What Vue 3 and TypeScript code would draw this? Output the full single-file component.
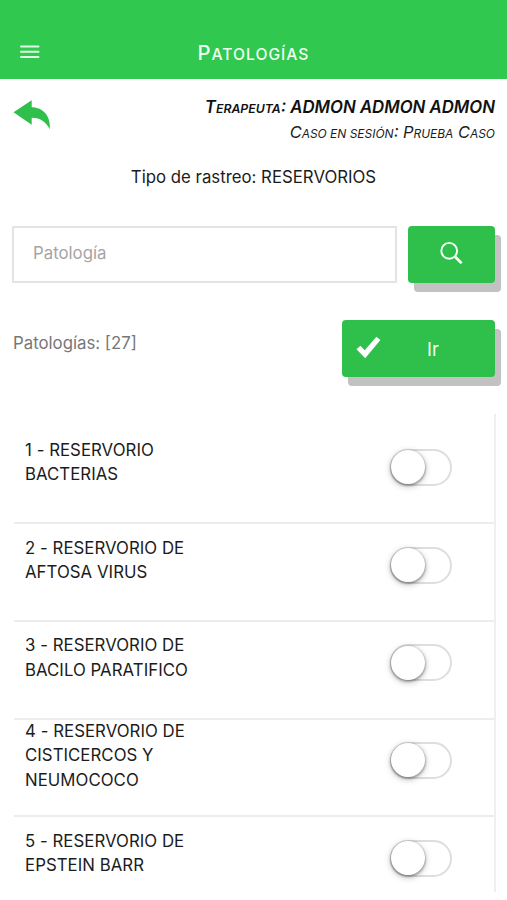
<script setup lang="ts">
import { ref } from 'vue'

interface Pathology {
  id: number
  lines: string[]
  active: boolean
}

const total = 27
const search = ref('')
const items = ref<Pathology[]>([
  { id: 1, lines: ['RESERVORIO', 'BACTERIAS'], active: false },
  { id: 2, lines: ['RESERVORIO DE', 'AFTOSA VIRUS'], active: false },
  { id: 3, lines: ['RESERVORIO DE', 'BACILO PARATIFICO'], active: false },
  { id: 4, lines: ['RESERVORIO DE', 'CISTICERCOS Y', 'NEUMOCOCO'], active: false },
  { id: 5, lines: ['RESERVORIO DE', 'EPSTEIN BARR'], active: false },
])
</script>

<template>
  <div class="screen">
    <header class="bar">
      <button class="menu" aria-label="Menú">
        <svg width="20" height="14" viewBox="0 0 20 14">
          <path d="M1 1.5H18.5M1 6.7H18.5M1 12H18.5" stroke="#e0f9e4" stroke-width="2" stroke-linecap="round" />
        </svg>
      </button>
      <h1 class="title">P<span class="sc">atologías</span></h1>
    </header>

    <section class="session">
      <button class="back" aria-label="Volver">
        <svg width="38" height="30" viewBox="0 0 38 30">
          <path d="M0.5 12.3 18.7 0.3V7.2C30 7.2 38 16 36.8 29.3C33 22.5 28 17.8 18.7 17.8V24.8Z" fill="#2fbf4b" />
        </svg>
      </button>
      <div class="who">
        <p class="therapist">T<span class="sc">erapeuta</span>: ADMON ADMON ADMON</p>
        <p class="case">C<span class="sc">aso en sesión</span>: P<span class="sc">rueba</span> C<span class="sc">aso</span></p>
      </div>
    </section>

    <p class="kind">Tipo de rastreo: RESERVORIOS</p>

    <form class="search" @submit.prevent>
      <input v-model="search" class="field" type="text" placeholder="Patología" />
      <button class="btn find" aria-label="Buscar">
        <svg width="24" height="24" viewBox="0 0 24 24" fill="none" stroke="#f2fff4">
          <circle cx="9.2" cy="9.8" r="7.9" stroke-width="1.9" />
          <path d="M15.1 15.7 21.6 22.2" stroke-width="2.8" />
        </svg>
      </button>
    </form>

    <div class="actions">
      <span class="count">Patologías: [{{ total }}]</span>
      <button class="btn go">
        <svg width="25" height="23" viewBox="0 0 25 23">
          <path d="M0.5 13.2 4.4 9.8 8.7 14.2 20.4 0.7 24.4 4 9.2 22.2Z" fill="#fff" />
        </svg>
        <span class="go-label">Ir</span>
      </button>
    </div>

    <ul class="list">
      <li v-for="item in items" :key="item.id" class="item">
        <div class="name">
          <span v-for="(line, i) in item.lines" :key="i"><template v-if="i === 0">{{ item.id }} - </template>{{ line }}</span>
        </div>
        <button
          class="switch"
          :class="{ on: item.active }"
          role="switch"
          :aria-checked="item.active"
          @click="item.active = !item.active"
        >
          <span class="knob"></span>
        </button>
      </li>
    </ul>
  </div>
</template>

<style>
body {
  margin: 0;
  background: #fff;
  overflow: hidden;
}
</style>

<style scoped>
.screen {
  box-sizing: border-box;
  height: 900px;
  overflow: hidden;
  background: #fff;
  color: #1c1c1c;
  font-family: Inter, 'Liberation Sans', sans-serif;
  font-size: 16.8px;
  line-height: 24.5px;
}
button {
  border: 0;
  padding: 0;
  background: none;
  font: inherit;
}
svg {
  display: block;
}
p {
  margin: 0;
}
.sc {
  font-size: 0.73em;
  line-height: 1;
  text-transform: uppercase;
}
.bar {
  box-sizing: border-box;
  height: 79px;
  padding: 25px 20px 0;
  display: grid;
  grid-template-columns: 20px 1fr 20px;
  align-items: center;
  background: #30c84f;
}
.title {
  margin: 2px 0 0;
  color: #effff1;
  font-size: 20.3px;
  font-weight: 500;
  text-align: center;
  letter-spacing: 1px;
}
.title .sc {
  font-size: 0.77em;
}
.session {
  display: flex;
  justify-content: space-between;
  padding: 16px 12px 0 13px;
}
.back {
  height: 30px;
  margin-top: 5px;
}
.who {
  text-align: right;
  font-style: italic;
}
.therapist {
  font-weight: 600;
  color: #111;
}
.case {
  font-size: 16.4px;
}
.kind {
  margin-top: 21px;
  text-align: center;
}
.search {
  display: flex;
  gap: 11px;
  padding: 36px 12px 0;
}
.field {
  box-sizing: border-box;
  flex: 1;
  min-width: 0;
  height: 57px;
  padding: 0 19px 3px;
  border: 2px solid #e4e4e4;
  border-radius: 0;
  background: #fff;
  font: inherit;
  outline: none;
}
.field::placeholder {
  color: #a5a5a5;
  opacity: 1;
}
.btn {
  height: 57px;
  border-radius: 4px;
  background: #2fbf4b;
  color: #f2fff4;
  box-shadow: 6px 9px 0 #c2c2c2;
}
.find {
  width: 87px;
  display: flex;
  align-items: center;
  justify-content: center;
  padding-bottom: 2px;
}
.actions {
  display: flex;
  justify-content: space-between;
  padding: 37px 12px 0 13px;
}
.count {
  margin-top: 11px;
  color: #777;
}
.go {
  width: 153px;
  display: flex;
  align-items: center;
  padding: 0 0 0 14px;
}
.go svg {
  margin-bottom: 2px;
}
.go-label {
  margin: 3px 0 0 46px;
  font-size: 18.5px;
}
.list {
  list-style: none;
  margin: 37px 11px 0 14px;
  padding: 13px 0 0;
  box-sizing: border-box;
  height: 478px;
  overflow: hidden;
  border-right: 2px solid #efefef;
}
.item {
  box-sizing: border-box;
  height: 97.7px;
  padding: 0 42px 24px 11px;
  border-bottom: 2px solid #ededed;
  display: flex;
  align-items: center;
  justify-content: space-between;
}
.name {
  display: flex;
  flex-direction: column;
  white-space: nowrap;
  letter-spacing: 0.04px;
}
.switch {
  box-sizing: border-box;
  width: 62px;
  height: 37px;
  margin-top: 10px;
  border: 2px solid #dedede;
  border-radius: 19px;
  background: #fff;
  display: flex;
  align-items: center;
}
.knob {
  width: 34px;
  height: 34px;
  margin-left: -1px;
  flex: none;
  border-radius: 50%;
  background: #fff;
  box-shadow: 0 1px 2px 1px rgba(0, 0, 0, 0.24), 0 2px 7px rgba(0, 0, 0, 0.28);
}
.switch.on {
  justify-content: flex-end;
  background: #30c84f;
}
</style>
